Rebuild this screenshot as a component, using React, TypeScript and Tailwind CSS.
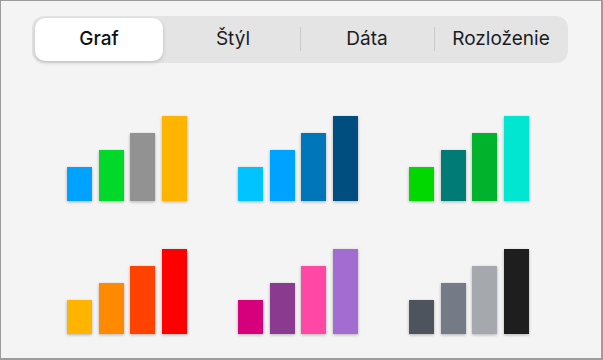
const TABS = ["Graf", "Štýl", "Dáta", "Rozloženie"];

const PALETTES: string[][] = [
  ["bg-[#00a2ff]", "bg-[#00d82a]", "bg-[#929292]", "bg-[#ffb400]"],
  ["bg-[#00c3ff]", "bg-[#00a2ff]", "bg-[#0076ba]", "bg-[#004e80]"],
  ["bg-[#00d800]", "bg-[#017b76]", "bg-[#00b22c]", "bg-[#00e6d1]"],
  ["bg-[#ffb400]", "bg-[#ff8a00]", "bg-[#ff4200]", "bg-[#ff0000]"],
  ["bg-[#d6007c]", "bg-[#8b3b8f]", "bg-[#ff48a6]", "bg-[#a36cd1]"],
  ["bg-[#4d545d]", "bg-[#757b86]", "bg-[#a5a9ad]", "bg-[#1e1e1e]"],
];

const HEIGHTS = ["h-[34px]", "h-[51px]", "h-[68px]", "h-[85px]"];

function ChartStyle({ colors }: { colors: string[] }) {
  return (
    <div className="flex items-end gap-[6.5px] h-[85px]">
      {colors.map((c, i) => (
        <div
          key={i}
          className={`w-[25px] ${HEIGHTS[i]} ${c} shadow-[0_1px_3px_rgba(0,0,0,0.28)]`}
        />
      ))}
    </div>
  );
}

export default function App() {
  const active = 0;
  return (
    <div
      className="w-[603px] h-[360px] bg-[#f4f4f4] border-[#9c9c9c] border-t border-l border-r-2 border-b-2 overflow-hidden"
      style={{ fontFamily: "Inter, 'Noto Sans', sans-serif" }}
    >
      <div className="ml-[31px] mt-[15px] w-[536px] h-[47px] rounded-[12px] bg-[#e4e4e5] flex items-stretch">
        {TABS.map((t, i) => {
          const sel = i === active;
          const showDivider = i > 0 && i !== active && i - 1 !== active;
          return (
            <div key={t} className="flex-1 flex items-center relative">
              {showDivider && (
                <div className="absolute left-0 top-[11px] h-[24px] w-px bg-[#c9c9cb]" />
              )}
              <div
                className={
                  sel
                    ? "w-full h-[43px] mx-[3px] rounded-[10px] bg-white shadow-[0_2px_4px_rgba(0,0,0,0.14),0_0_1px_rgba(0,0,0,0.1)] flex items-center justify-center text-[19px] font-medium text-[#111]"
                    : "w-full h-full flex items-center justify-center text-[19px] text-[#1c1c1e]"
                }
              >
                {t}
              </div>
            </div>
          );
        })}
      </div>

      <div className="ml-[66px] mt-[53px] grid grid-cols-[119.5px_119.5px_119.5px] gap-x-[51.5px] gap-y-[48px]">
        {PALETTES.map((p, i) => (
          <ChartStyle key={i} colors={p} />
        ))}
      </div>
    </div>
  );
}
